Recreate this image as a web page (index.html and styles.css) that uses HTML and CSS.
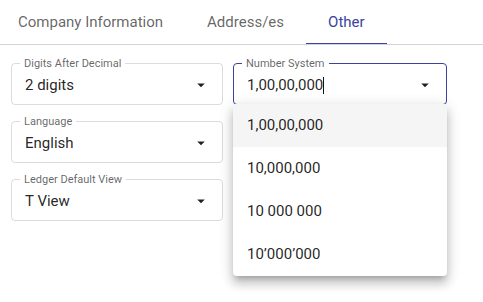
FILE: index.html
```html
<!DOCTYPE html>
<html lang="en">
<head>
<meta charset="utf-8">
<title>Settings</title>
<link rel="stylesheet" href="styles.css">
</head>
<body>
<div class="tabs">
  <div class="tab">Company Information</div>
  <div class="tab">Address/es</div>
  <div class="tab active">Other</div>
</div>
<div class="form">
  <div class="field">
    <span class="label">Digits After Decimal</span>
    <span class="value">2 digits</span>
    <svg class="arrow" viewBox="0 0 24 24"><path d="M7 10l5 5 5-5z"/></svg>
  </div>
  <div class="field focused">
    <span class="label">Number System</span>
    <span class="value">1,00,00,000<span class="caret"></span></span>
    <svg class="arrow" viewBox="0 0 24 24"><path d="M7 10l5 5 5-5z"/></svg>
    <ul class="menu">
      <li class="item hover">1,00,00,000</li>
      <li class="item">10,000,000</li>
      <li class="item">10 000 000</li>
      <li class="item">10’000’000</li>
    </ul>
  </div>
  <div class="field">
    <span class="label">Language</span>
    <span class="value">English</span>
    <svg class="arrow" viewBox="0 0 24 24"><path d="M7 10l5 5 5-5z"/></svg>
  </div>
  <div class="spacer"></div>
  <div class="field">
    <span class="label">Ledger Default View</span>
    <span class="value">T View</span>
    <svg class="arrow" viewBox="0 0 24 24"><path d="M7 10l5 5 5-5z"/></svg>
  </div>
</div>
</body>
</html>
```
FILE: styles.css
```css
* { box-sizing: border-box; }
html, body { margin: 0; padding: 0; background: #fff; }
body {
  font-family: Roboto, "Noto Sans", sans-serif;
  color: rgba(0,0,0,0.87);
  width: 483px;
  height: 302px;
  overflow: hidden;
}
.tabs {
  display: flex;
  height: 45px;
  border-bottom: 1px solid #d4d4d4;
}
.tab {
  height: 44px;
  display: flex;
  align-items: center;
  padding: 0 22px;
  font-size: 15px;
  color: rgba(0,0,0,0.62);
  white-space: nowrap;
}
.tab:first-child { padding-left: 18px; }
.tab.active {
  color: #3a43a0;
  border-bottom: 1px solid #3a43a0;
}
.form {
  display: grid;
  grid-template-columns: 212px 214px;
  grid-auto-rows: 42px;
  column-gap: 10px;
  row-gap: 16px;
  padding: 18px 0 0 11px;
}
.field {
  position: relative;
  height: 42px;
  border: 1px solid #dcdcdc;
  border-radius: 4px;
  display: flex;
  align-items: center;
  padding: 2px 12px 0 13px;
}
.field.focused { border-color: #3a43a0; }
.label {
  position: absolute;
  top: -7px;
  left: 8px;
  padding: 0 4px;
  background: #fff;
  font-size: 11px;
  line-height: 13px;
  color: rgba(0,0,0,0.62);
  white-space: nowrap;
}
.value {
  flex: 1;
  font-size: 15px;
  line-height: 18px;
  display: flex;
  align-items: center;
}
.caret {
  display: inline-block;
  width: 1px;
  height: 17px;
  background: #111;
  margin-left: 0;
}
.arrow {
  width: 18px;
  height: 18px;
  fill: rgba(0,0,0,0.87);
  flex: none;
  margin-top: 0;
}
.menu {
  position: absolute;
  top: 100%;
  left: -1px;
  right: -1px;
  margin: 0;
  padding: 0;
  list-style: none;
  background: #fff;
  border-radius: 4px;
  box-shadow: 0 5px 5px -3px rgba(0,0,0,0.2), 0 8px 10px 1px rgba(0,0,0,0.14), 0 3px 14px 2px rgba(0,0,0,0.12);
  z-index: 2;
}
.item {
  height: 43px;
  display: flex;
  align-items: center;
  padding: 0 14px 1px;
  font-size: 15px;
  color: rgba(0,0,0,0.87);
}
.item.hover { background: #f5f5f5; border-radius: 4px 4px 0 0; }
.spacer { }
```
